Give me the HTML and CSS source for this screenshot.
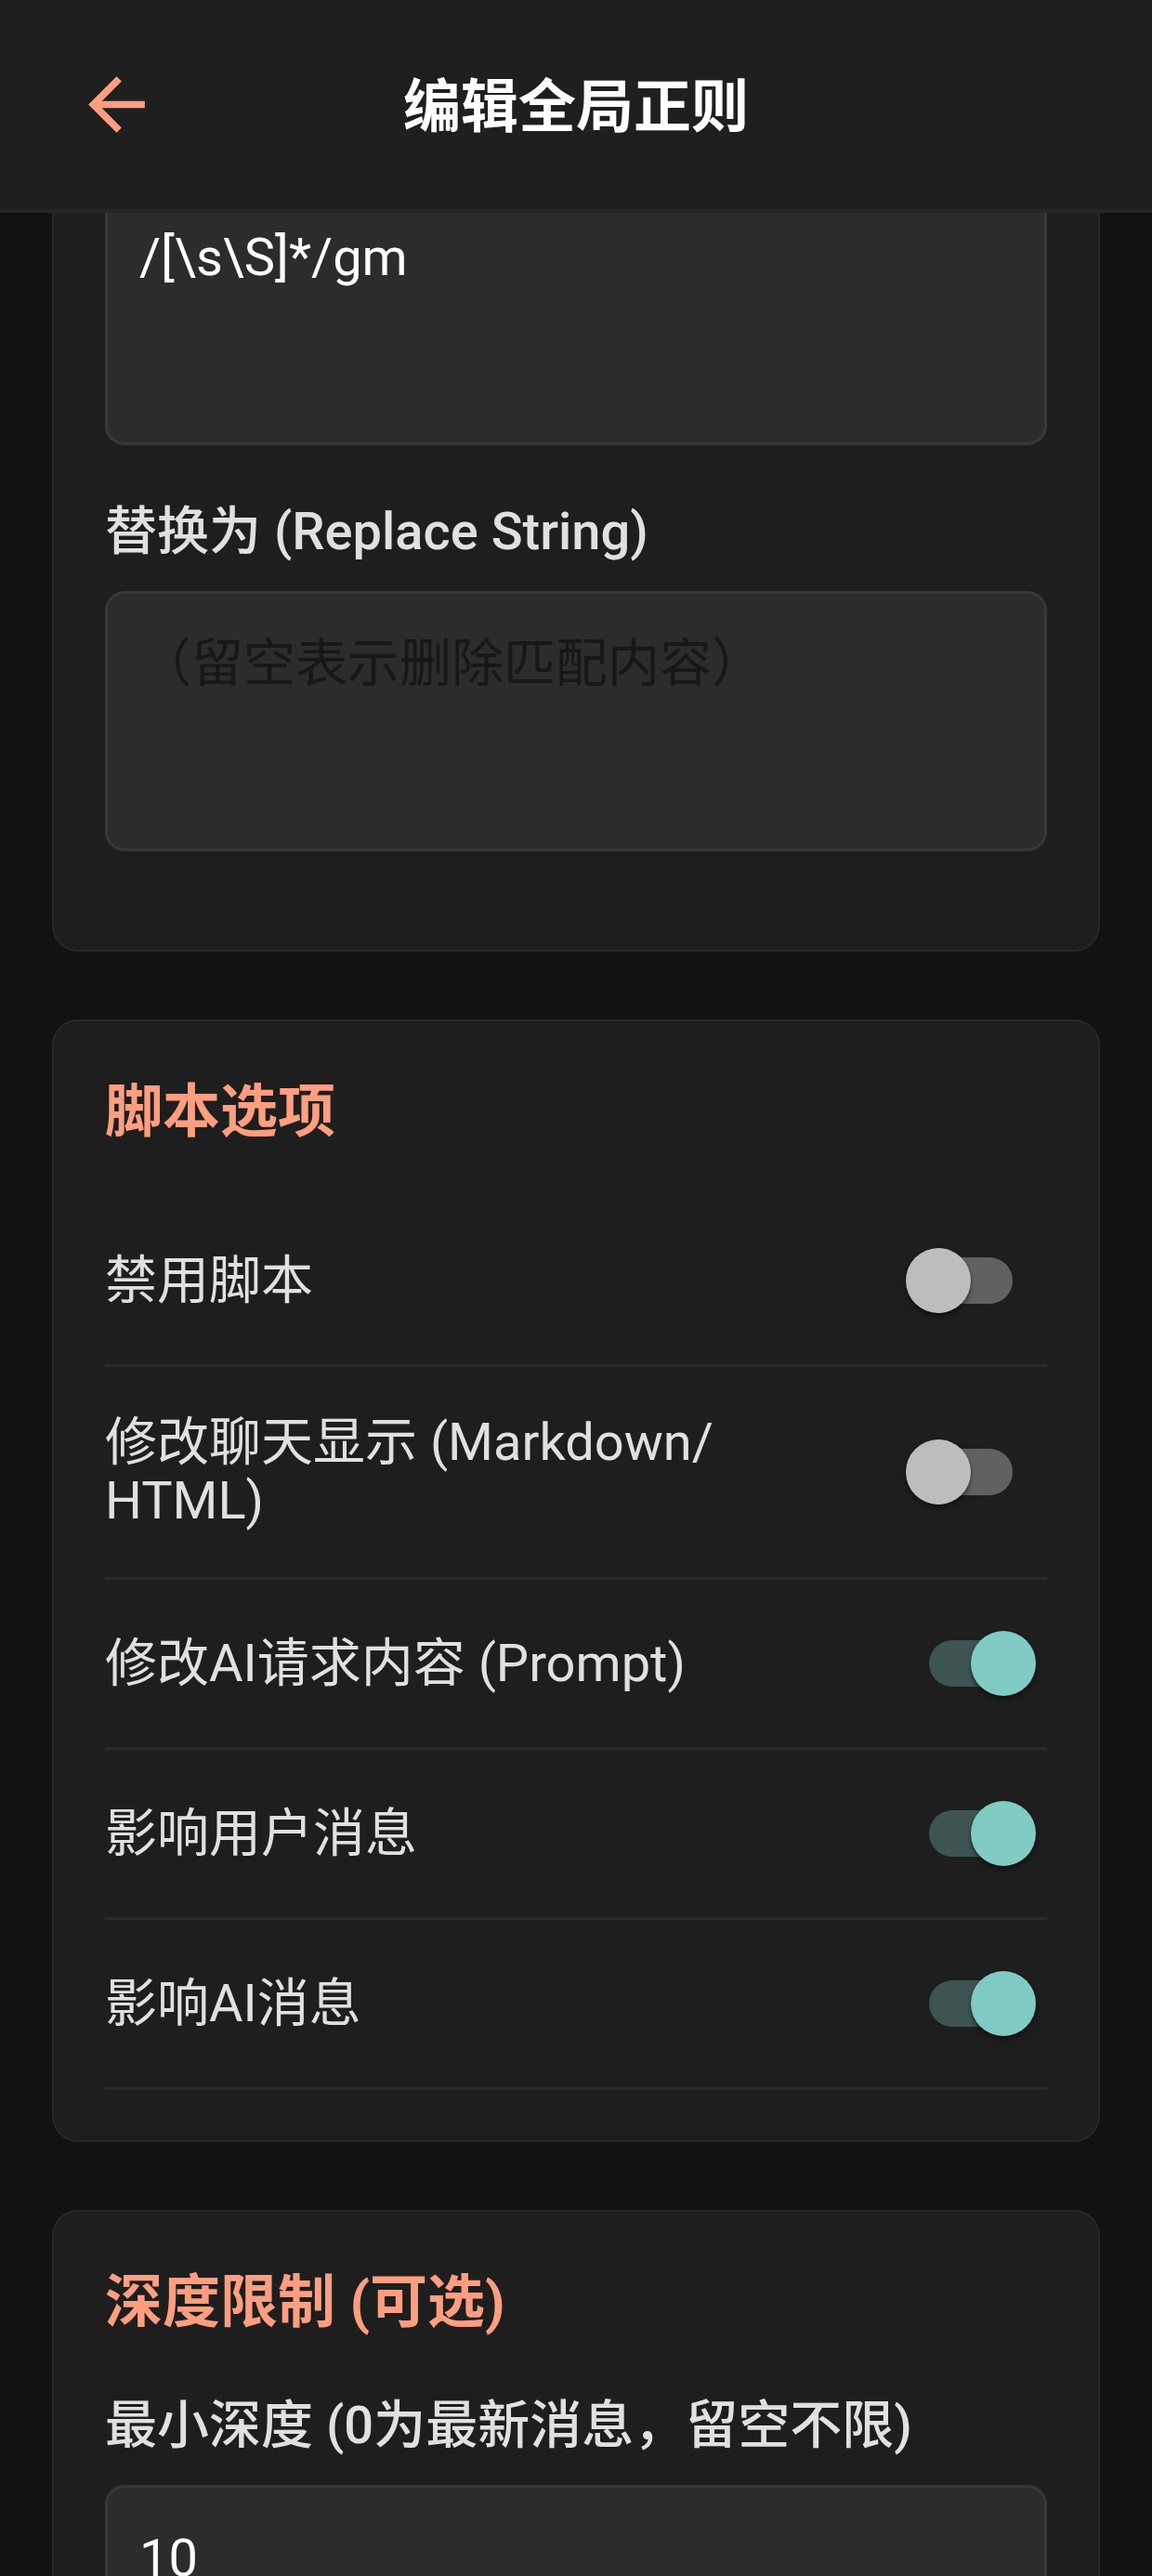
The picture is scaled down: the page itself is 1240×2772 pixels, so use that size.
FILE: index.html
```html
<!DOCTYPE html>
<html lang="zh-CN">
<head>
<meta charset="utf-8">
<title>编辑全局正则</title>
<link rel="stylesheet" href="styles.css">
</head>
<body>
<header class="topbar">
  <button class="back" type="button" aria-label="返回">
    <svg viewBox="0 0 24 24" class="back-icon"><path d="M20 11H7.83l5.59-5.59L12 4l-8 8 8 8 1.41-1.41L7.83 13H20v-2z"/></svg>
  </button>
  <h1 class="title">编辑全局正则</h1>
  <span class="spacer"></span>
</header>

<main class="page">
  <section class="card">
    <div class="field">
      <textarea class="textbox" readonly>/[\s\S]*/gm</textarea>
    </div>
    <div class="field">
      <label class="field-label">替换为 (Replace String)</label>
      <textarea class="textbox" placeholder="（留空表示删除匹配内容）"></textarea>
    </div>
  </section>

  <section class="card">
    <h2 class="card-title">脚本选项</h2>
    <div class="row">
      <span class="row-text">禁用脚本</span>
      <span class="switch"><span class="track"></span><span class="knob"></span></span>
    </div>
    <div class="row">
      <span class="row-text">修改聊天显示 (Markdown/<wbr>HTML)</span>
      <span class="switch"><span class="track"></span><span class="knob"></span></span>
    </div>
    <div class="row">
      <span class="row-text">修改AI请求内容 (Prompt)</span>
      <span class="switch on"><span class="track"></span><span class="knob"></span></span>
    </div>
    <div class="row">
      <span class="row-text">影响用户消息</span>
      <span class="switch on"><span class="track"></span><span class="knob"></span></span>
    </div>
    <div class="row">
      <span class="row-text">影响AI消息</span>
      <span class="switch on"><span class="track"></span><span class="knob"></span></span>
    </div>
  </section>

  <section class="card">
    <h2 class="card-title">深度限制 (可选)</h2>
    <div class="field">
      <label class="field-label">最小深度 (0为最新消息，留空不限)</label>
      <input class="textbox input" type="text" value="10" readonly>
    </div>
  </section>
</main>
</body>
</html>
```

FILE: styles.css
```css
html, body {
  margin: 0;
  padding: 0;
  overflow: hidden;
  background: #121212;
}

body {
  font-family: "Roboto", "Noto Sans CJK SC", sans-serif;
  color: #e0e0e0;
  height: 2772px;
}

.topbar {
  position: fixed;
  top: 0;
  left: 0;
  right: 0;
  z-index: 10;
  height: 225px;
  background: #1f1f1f;
  border-bottom: 4px solid #262626;
  display: grid;
  grid-template-columns: 1fr auto 1fr;
  align-items: center;
  padding: 0 80px;
}

.back {
  background: none;
  border: 0;
  padding: 0;
  width: 91px;
  height: 91px;
  display: flex;
  cursor: pointer;
}

.back-icon {
  width: 91px;
  height: 91px;
  fill: #ff9e80;
}

.title {
  margin: 8px 0 0;
  font-size: 62px;
  font-weight: 700;
  color: #ffffff;
  line-height: 1.2;
}

.page {
  padding: 137px 56px 0;
  display: flex;
  flex-direction: column;
  gap: 73px;
}

.card {
  background: #1e1e1e;
  border: 2px solid #282828;
  border-radius: 28px;
  padding: 60px 55px 54px;
}

.card-title {
  margin: 0 0 53px;
  font-size: 62px;
  line-height: 76px;
  font-weight: 700;
  color: #ff9e80;
}

.field {
  display: flex;
  flex-direction: column;
  margin-bottom: 52px;
}

.field-label {
  margin: 10px 0 32px;
  font-size: 56px;
  line-height: 63px;
  font-weight: 500;
  color: #e0e0e0;
}

.textbox {
  box-sizing: border-box;
  display: block;
  width: 100%;
  height: 280px;
  margin: 0;
  padding: 44px 34px;
  font-family: "Roboto", "Noto Sans CJK SC", sans-serif;
  font-size: 56px;
  line-height: 63px;
  color: #ffffff;
  background: #2c2c2c;
  border: 3px solid #383838;
  border-radius: 21px;
  resize: none;
  outline: none;
  overflow: hidden;
}

.textbox::placeholder {
  color: #171717;
  opacity: 1;
}

.input {
  height: 157px;
}

.row {
  display: flex;
  align-items: center;
  justify-content: space-between;
  gap: 40px;
  padding: 50px 0;
  border-bottom: 3px solid #2a2a2a;
}

.row-text {
  flex: 1;
  max-width: 820px;
  font-size: 56px;
  line-height: 63px;
  color: #e0e0e0;
}

.switch {
  position: relative;
  flex: none;
  width: 140px;
  height: 80px;
  margin-right: 12px;
}

.track {
  position: absolute;
  left: 25px;
  top: 15px;
  width: 90px;
  height: 50px;
  border-radius: 25px;
  background: #616161;
}

.knob {
  position: absolute;
  left: 0;
  top: 5px;
  width: 70px;
  height: 70px;
  border-radius: 50%;
  background: #bdbdbd;
  box-shadow: 0 4px 5px rgba(0, 0, 0, 0.35), 0 1px 3px rgba(0, 0, 0, 0.3);
}

.switch.on .track {
  background: #3d5452;
}

.switch.on .knob {
  left: 70px;
  background: #80cbc4;
}
```
